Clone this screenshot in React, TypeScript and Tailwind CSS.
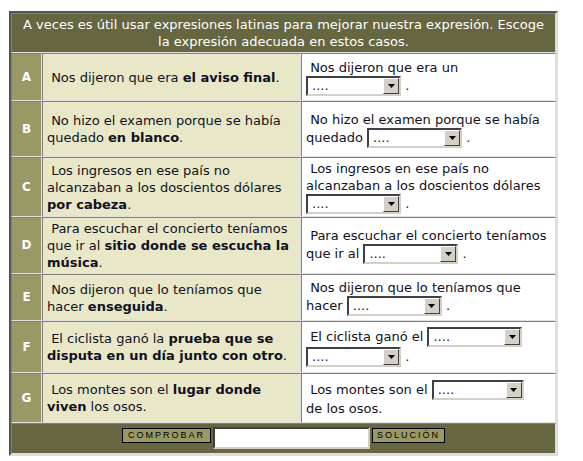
import React from 'react'

type Row = {
  letter: string
  h: string
  left: React.ReactNode
  right: React.ReactNode
}

function Drop({ w = 'w-[95px]' }: { w?: string }) {
  return (
    <span
      className={`inline-flex h-[20px] ${w} items-stretch border-2 border-t-[#404040] border-l-[#404040] border-b-[#d4d0c8] border-r-[#d4d0c8] bg-white align-middle`}
    >
      <span className="flex-1 pl-[4px] text-[13px] leading-[15px] text-[#222]">....</span>
      <span className="flex w-[16px] items-center justify-center border border-t-white border-l-white border-b-[#404040] border-r-[#404040] bg-[#d4d0c8]">
        <svg width="7" height="4" viewBox="0 0 7 4">
          <path d="M0 0h7L3.5 4z" fill="#000" />
        </svg>
      </span>
    </span>
  )
}

const rows: Row[] = [
  {
    letter: 'A',
    h: 'h-[48px]',
    left: (
      <>
        {' '}Nos dijeron que era <b>el aviso final</b>.
      </>
    ),
    right: (
      <>
        {' '}Nos dijeron que era un <br />
        <Drop /> .
      </>
    ),
  },
  {
    letter: 'B',
    h: 'h-[56px]',
    left: (
      <>
        {' '}No hizo el examen porque se había quedado <b>en blanco</b>.
      </>
    ),
    right: (
      <>
        {' '}No hizo el examen porque se había quedado <Drop /> .
      </>
    ),
  },
  {
    letter: 'C',
    h: 'h-[60px]',
    left: (
      <>
        {' '}Los ingresos en ese país no alcanzaban a los doscientos dólares <b>por cabeza</b>.
      </>
    ),
    right: (
      <>
        {' '}Los ingresos en ese país no alcanzaban a los doscientos dólares <Drop /> .
      </>
    ),
  },
  {
    letter: 'D',
    h: 'h-[57px]',
    left: (
      <>
        {' '}Para escuchar el concierto teníamos que ir al <b>sitio donde se escucha la música</b>.
      </>
    ),
    right: (
      <>
        {' '}Para escuchar el concierto teníamos que ir al <Drop /> .
      </>
    ),
  },
  {
    letter: 'E',
    h: 'h-[47px]',
    left: (
      <>
        {' '}Nos dijeron que lo teníamos que hacer <b>enseguida</b>.
      </>
    ),
    right: (
      <>
        {' '}Nos dijeron que lo teníamos que hacer <Drop /> .
      </>
    ),
  },
  {
    letter: 'F',
    h: 'h-[52px]',
    left: (
      <>
        {' '}El ciclista ganó la <b>prueba que se disputa en un día junto con otro</b>.
      </>
    ),
    right: (
      <>
        {' '}El ciclista ganó el <Drop /> <Drop /> .
      </>
    ),
  },
  {
    letter: 'G',
    h: 'h-[50px]',
    left: (
      <>
        {' '}Los montes son el <b>lugar donde viven</b> los osos.
      </>
    ),
    right: (
      <>
        {' '}Los montes son el <Drop w="w-[92px]" />
        <br />
        de los osos.
      </>
    ),
  },
]

const cell = 'border border-t-[#808080] border-l-[#808080] border-b-[#e0e0e0] border-r-[#e0e0e0]'

export default function App() {
  return (
    <div className="min-h-[461px] bg-white pl-[9px] pt-[11px] font-['DejaVu_Sans',Verdana,sans-serif] text-[13px] leading-[17px] text-[#111122]">
      <table className="w-[549px] table-fixed border-separate border-spacing-0 border-2 border-t-[#555] border-l-[#555] border-b-[#ddd] border-r-[#ddd] bg-[#666640]">
        <colgroup>
          <col className="w-[31px]" />
          <col className="w-[259px]" />
          <col />
        </colgroup>
        <tbody>
          <tr className="h-[40px]">
            <td colSpan={3} className={`${cell} px-[6px] py-0 text-center text-white`}>
              A veces es útil usar expresiones latinas para mejorar nuestra expresión. Escoge la expresión adecuada en estos casos.
            </td>
          </tr>
          {rows.map(r => (
            <tr key={r.letter} className={r.h}>
              <td className={`${cell} bg-[#999966] text-center text-[12px] font-bold text-white`}>{r.letter}</td>
              <td className={`${cell} bg-[#e8e8c8] px-[4px] py-0 whitespace-pre-wrap`}>{r.left}</td>
              <td className={`${cell} bg-white px-[4px] py-0 whitespace-pre-wrap`}>{r.right}</td>
            </tr>
          ))}
          <tr className="h-[31px]">
            <td colSpan={3} className={`${cell} pt-[3px] align-top`}>
              <div className="flex items-start justify-center">
                <button className="mt-[1px] h-[15px] border border-black bg-[#999966] px-[5px] font-['Liberation_Sans',Arial,sans-serif] text-[9px] leading-[13px] tracking-[2px] text-black">
                  COMPROBAR
                </button>
                <input
                  className="mx-[2px] h-[22px] w-[157px] border-2 border-t-[#404040] border-l-[#404040] border-b-[#d4d0c8] border-r-[#d4d0c8] bg-white"
                  readOnly
                />
                <button className="mt-[1px] h-[15px] border border-black bg-[#999966] px-[4px] font-['Liberation_Sans',Arial,sans-serif] text-[9px] leading-[13px] tracking-[2px] text-black">
                  SOLUCIÓN
                </button>
              </div>
            </td>
          </tr>
        </tbody>
      </table>
    </div>
  )
}
